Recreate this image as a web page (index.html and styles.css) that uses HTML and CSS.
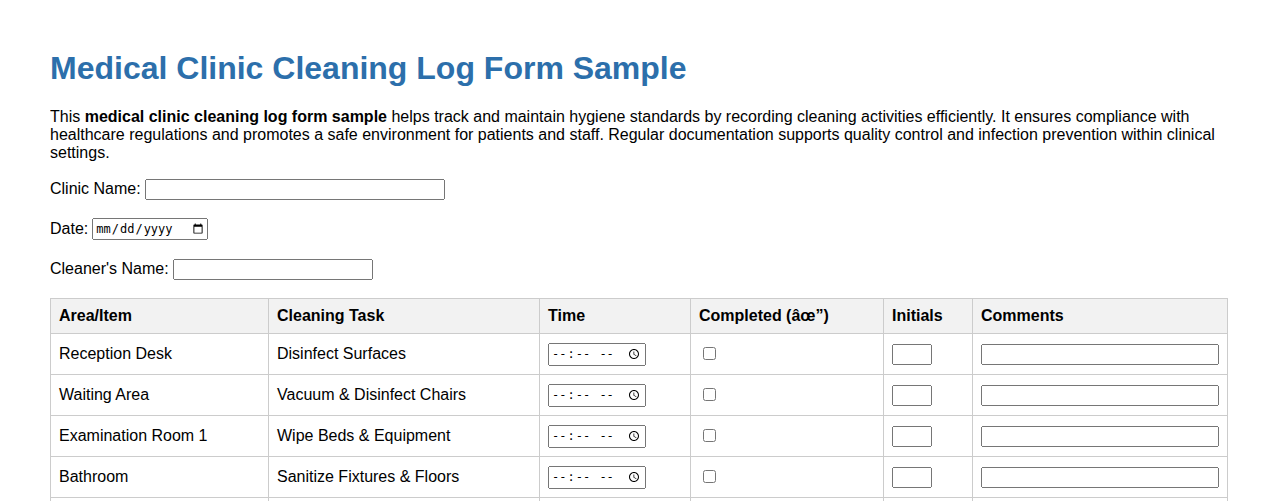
FILE: index.html
```html
<!DOCTYPE html>
<html lang="en">
<head>
<meta charset="UTF-8">
<title>Medical Clinic Cleaning Log Form Sample</title>
<link rel="stylesheet" href="styles.css">
</head>
<body>
<h1 class="title">Medical Clinic Cleaning Log Form Sample</h1>
<p class="intro">This <strong>medical clinic cleaning log form sample</strong> helps track and maintain hygiene standards by recording cleaning activities efficiently. It ensures compliance with healthcare regulations and promotes a safe environment for patients and staff. Regular documentation supports quality control and infection prevention within clinical settings.</p>
<form class="log-form">
<div class="field"><label>Clinic Name:</label><input type="text" class="input-text input-clinic"></div>
<div class="field"><label>Date:</label><input type="date" class="input-date"></div>
<div class="field"><label>Cleaner's Name:</label><input type="text" class="input-text input-cleaner"></div>
<table class="log-table">
<thead>
<tr>
<th class="c-area">Area/Item</th>
<th class="c-task">Cleaning Task</th>
<th class="c-time">Time</th>
<th class="c-done">Completed (âœ”)</th>
<th class="c-init">Initials</th>
<th class="c-comm">Comments</th>
</tr>
</thead>
<tbody>
<tr>
<td>Reception Desk</td>
<td>Disinfect Surfaces</td>
<td><input type="time" class="input-time"></td>
<td><input type="checkbox"></td>
<td><input type="text" class="input-init"></td>
<td><input type="text" class="input-comm"></td>
</tr>
<tr>
<td>Waiting Area</td>
<td>Vacuum &amp; Disinfect Chairs</td>
<td><input type="time" class="input-time"></td>
<td><input type="checkbox"></td>
<td><input type="text" class="input-init"></td>
<td><input type="text" class="input-comm"></td>
</tr>
<tr>
<td>Examination Room 1</td>
<td>Wipe Beds &amp; Equipment</td>
<td><input type="time" class="input-time"></td>
<td><input type="checkbox"></td>
<td><input type="text" class="input-init"></td>
<td><input type="text" class="input-comm"></td>
</tr>
<tr>
<td>Bathroom</td>
<td>Sanitize Fixtures &amp; Floors</td>
<td><input type="time" class="input-time"></td>
<td><input type="checkbox"></td>
<td><input type="text" class="input-init"></td>
<td><input type="text" class="input-comm"></td>
</tr>
<tr>
<td>Examination Room 2</td>
<td>Wipe Beds &amp; Equipment</td>
<td><input type="time" class="input-time"></td>
<td><input type="checkbox"></td>
<td><input type="text" class="input-init"></td>
<td><input type="text" class="input-comm"></td>
</tr>
</tbody>
</table>
</form>
</body>
</html>
```
FILE: styles.css
```css
body {
  margin: 50px;
  font-family: "Liberation Sans", Arial, sans-serif;
  font-size: 16px;
  color: #000;
  background: #fff;
}
.title {
  color: #2c6fab;
  font-size: 32px;
  margin: 0 0 21px;
}
.intro {
  margin: 0 0 16px;
  line-height: 18px;
}
.field {
  display: flex;
  align-items: center;
  gap: 4px;
  height: 22px;
  margin: 0 0 18px;
}
.input-text {
  box-sizing: border-box;
  height: 21px;
}
.input-clinic {
  width: 300px;
}
.input-cleaner {
  width: 200px;
}
.input-date {
  box-sizing: border-box;
  width: 116px;
  height: 22px;
  font-size: 12px;
}
.log-table {
  width: 100%;
  border-collapse: collapse;
}
.log-table th,
.log-table td {
  border: 1px solid #ccc;
  padding: 8px;
  text-align: left;
}
.log-table th {
  background: #f2f2f2;
  font-weight: bold;
}
.log-table tbody tr {
  height: 41px;
}
.c-area { width: 201px; }
.c-task { width: 254px; }
.c-time { width: 134px; }
.c-done { width: 176px; }
.c-init { width: 72px; }
.c-comm { width: auto; }
.input-time {
  box-sizing: border-box;
  width: 98px;
  height: 23px;
  font-size: 12px;
}
.input-init {
  box-sizing: border-box;
  width: 40px;
  height: 21px;
}
.input-comm {
  width: 100%;
  box-sizing: border-box;
  height: 21px;
}
```
